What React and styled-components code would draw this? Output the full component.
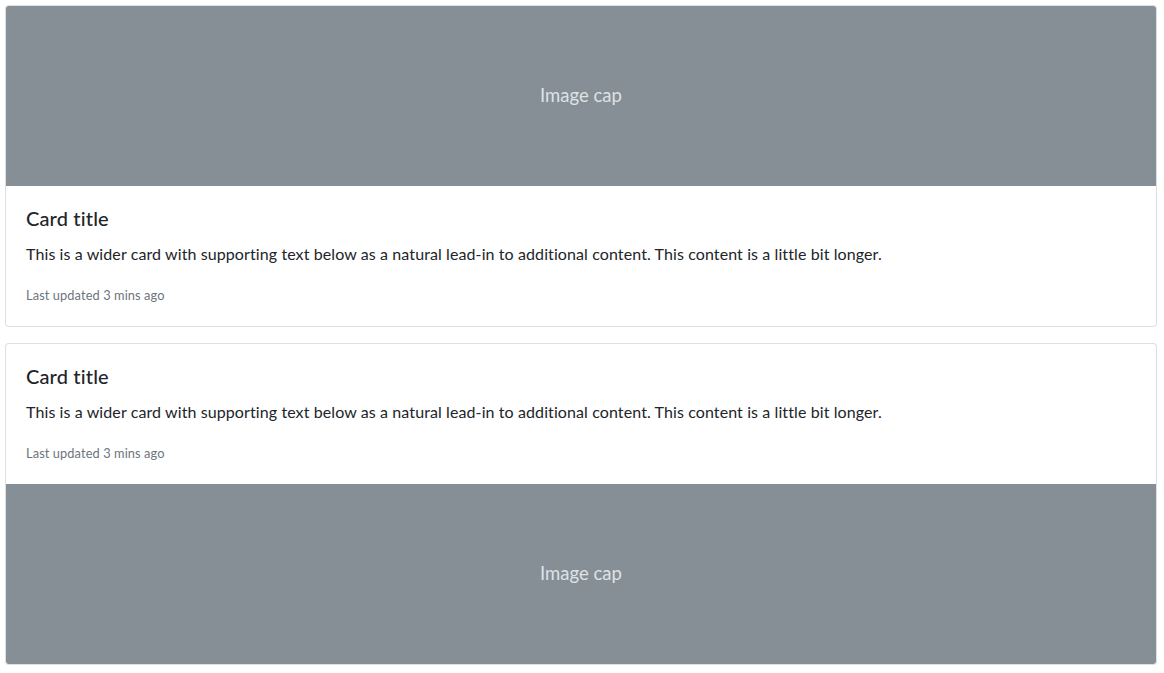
import styled, { createGlobalStyle } from "styled-components";

const GlobalStyle = createGlobalStyle`
  body {
    margin: 0;
    font-family: "Segoe UI", Lato, "Noto Sans", sans-serif;
    color: #212529;
    background: #fff;
  }
`;

const Page = styled.div`
  padding: 5px 7px 5px 5px;
  display: flex;
  flex-direction: column;
  gap: 16px;
`;

const Card = styled.div`
  display: flex;
  flex-direction: column;
  border: 1px solid rgba(0, 0, 0, 0.125);
  border-radius: 4px;
  background: #fff;
  overflow: hidden;
`;

const ImageCap = styled.div`
  height: 180px;
  box-sizing: border-box;
  padding-bottom: 3px;
  background: #868e96;
  color: #dee2e6;
  display: flex;
  align-items: center;
  justify-content: center;
  font-size: 18.5px;
`;

const Body = styled.div`
  padding: 20px;
`;

const Title = styled.h5`
  margin: 0 0 12px;
  font-size: 20px;
  font-weight: 500;
  line-height: 24px;
  letter-spacing: 0.15px;
`;

const Text = styled.p`
  margin: 0 0 16px;
  font-size: 16px;
  line-height: 24px;
  height: 24px;
  letter-spacing: 0.1px;
  &:last-child {
    margin-bottom: 0;
  }
`;

const Muted = styled.small`
  font-size: 12.8px;
  line-height: 1;
  color: #6c757d;
  letter-spacing: 0.1px;
`;

const CardBody = () => (
  <Body>
    <Title>Card title</Title>
    <Text>
      This is a wider card with supporting text below as a natural lead-in to
      additional content. This content is a little bit longer.
    </Text>
    <Text>
      <Muted>Last updated 3 mins ago</Muted>
    </Text>
  </Body>
);

export default function App() {
  return (
    <>
      <GlobalStyle />
      <Page>
        <Card>
          <ImageCap>Image cap</ImageCap>
          <CardBody />
        </Card>
        <Card>
          <CardBody />
          <ImageCap>Image cap</ImageCap>
        </Card>
      </Page>
    </>
  );
}
